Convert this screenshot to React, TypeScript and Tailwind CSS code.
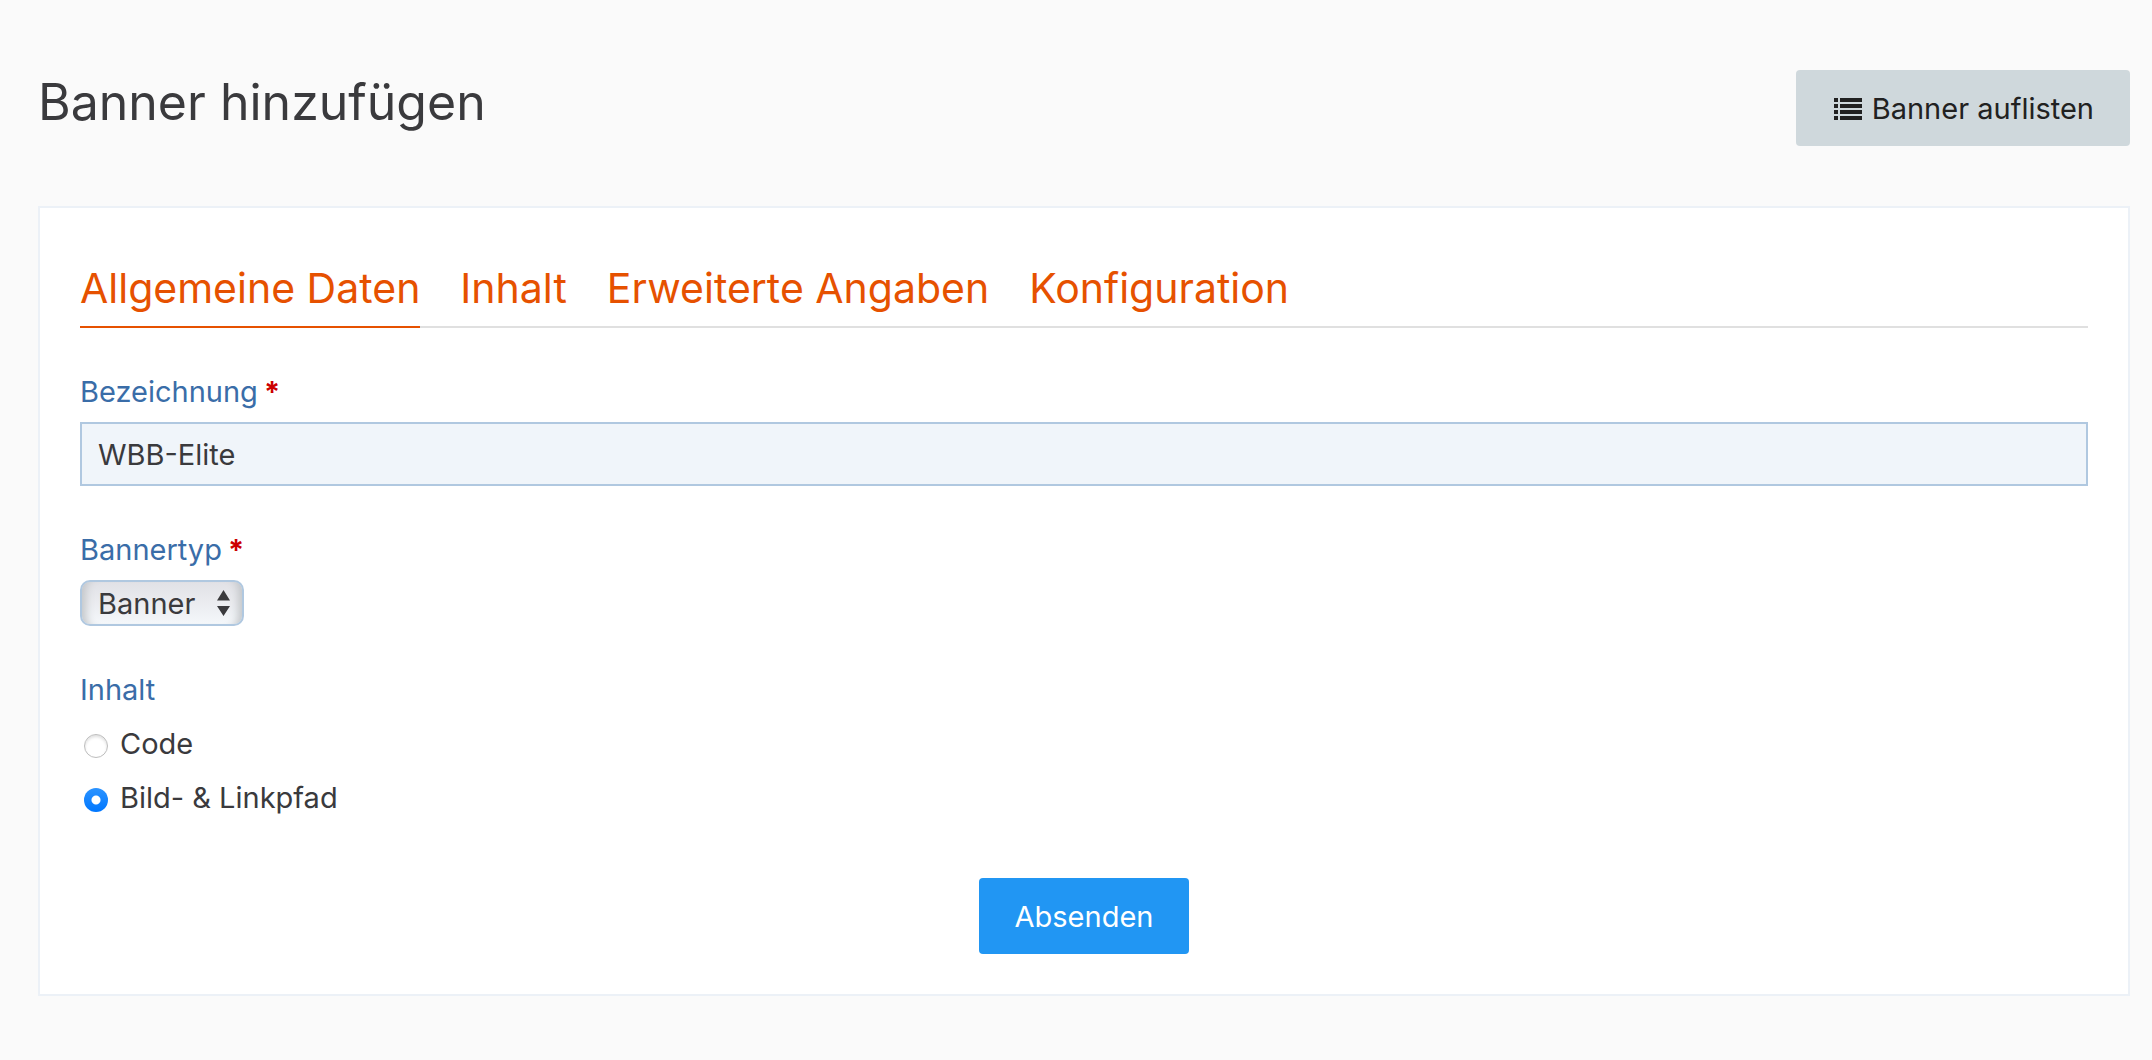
import { useId, useState } from "react";
import type { ReactNode } from "react";

const TABS = ["Allgemeine Daten", "Inhalt", "Erweiterte Angaben", "Konfiguration"];

const CONTENT_TYPES = [
  { value: "code", label: "Code" },
  { value: "path", label: "Bild- & Linkpfad" },
];

const ListIcon = () => (
  <svg viewBox="0 0 28 22" fill="currentColor" shapeRendering="crispEdges" className="w-7 h-[22px]" aria-hidden="true">
    <path d="M0 0h4v4H0zM6 0h22v4H6zM0 6h4v4H0zM6 6h22v4H6zM0 12h4v4H0zM6 12h22v4H6zM0 18h4v4H0zM6 18h22v4H6z" />
  </svg>
);

const SelectArrows = () => (
  <svg
    viewBox="0 0 13 26"
    fill="currentColor"
    className="[grid-area:1/1] justify-self-end self-center w-[13px] h-[26px] mr-[14px] pointer-events-none"
    aria-hidden="true"
  >
    <path d="M6.500 0L13 10.500H0zM0 16h13L6.500 26z" />
  </svg>
);

interface FieldLabelProps {
  htmlFor: string;
  children: ReactNode;
}

function RequiredLabel({ htmlFor, children }: FieldLabelProps) {
  return (
    <label htmlFor={htmlFor} className="flex gap-[6px] leading-10 text-[#3a6da8]">
      {children}
      <span className="text-[#cc0000] font-bold">*</span>
    </label>
  );
}

function TabMenu() {
  const [active, setActive] = useState(TABS[0]);

  return (
    <nav className="flex gap-10 border-b-2 border-[#e0e0e0]" role="tablist">
      {TABS.map((tab) => (
        <button
          key={tab}
          type="button"
          role="tab"
          aria-selected={tab === active}
          onClick={() => setActive(tab)}
          className={
            tab === active
              ? "-mb-[2px] pt-2 pb-[6px] border-b-2 border-[#e65100] text-[41px] leading-[64px] text-[#e65100]"
              : "-mb-[2px] pt-2 pb-[6px] border-b-2 border-transparent text-[41px] leading-[64px] text-[#e65100]"
          }
        >
          {tab}
        </button>
      ))}
    </nav>
  );
}

export default function App() {
  const id = useId();
  const [title, setTitle] = useState("WBB-Elite");
  const [content, setContent] = useState("path");

  return (
    <main className="min-h-screen bg-[#fafafa] pl-[38px] pr-[22px] pt-[70px] pb-16 font-['Inter','Liberation_Sans',sans-serif] text-[29px] text-[#3a3a3d]">
      <header className="flex items-start justify-between">
        <h1 className="text-[50px] leading-[64px]">Banner hinzufügen</h1>
        <a
          href="#liste"
          className="flex items-center gap-[10px] h-[76px] pl-[38px] pr-9 pt-[2px] rounded bg-[#cfd8dc] text-[#212121]"
        >
          <ListIcon />
          Banner auflisten
        </a>
      </header>

      <form
        className="mt-[60px] px-10 pt-10 pb-10 border-2 border-[#ecf1f7] bg-white"
        onSubmit={(e) => e.preventDefault()}
      >
        <TabMenu />

        <div className="mt-11">
          <RequiredLabel htmlFor={`${id}-title`}>Bezeichnung</RequiredLabel>
          <input
            id={`${id}-title`}
            type="text"
            required
            value={title}
            onChange={(e) => setTitle(e.target.value)}
            className="block w-full h-16 mt-[10px] px-4 border-2 border-[#b0c8e0] bg-[#f0f5fa] outline-none"
          />
        </div>

        <div className="mt-11">
          <RequiredLabel htmlFor={`${id}-type`}>Bannertyp</RequiredLabel>
          <div className="grid w-[164px] mt-[10px]">
            <select
              id={`${id}-type`}
              defaultValue="banner"
              className="[grid-area:1/1] appearance-none h-[46px] px-4 rounded-[10px] border-2 border-[#b0c8e0] bg-linear-to-b from-[#e1e1e6] to-[#f4f7fa] shadow-[inset_12px_0_8px_-8px_#c3c6c9,inset_-12px_0_8px_-8px_#c3c6c9] outline-none"
            >
              <option value="banner">Banner</option>
              <option value="text">Text</option>
            </select>
            <SelectArrows />
          </div>
        </div>

        <fieldset className="mt-11">
          <legend className="leading-10 text-[#3a6da8]">Inhalt</legend>
          <div className="flex flex-col items-start gap-[14px] mt-[14px]">
            {CONTENT_TYPES.map((type) => (
              <label key={type.value} className="flex items-center gap-3 pl-1 leading-10">
                <input
                  type="radio"
                  name={`${id}-content`}
                  value={type.value}
                  checked={content === type.value}
                  onChange={() => setContent(type.value)}
                  className="appearance-none size-6 mt-1 rounded-full border border-[#bdbdbd] bg-white shadow-[inset_0_2px_3px_#e0e0e0] checked:border-0 checked:shadow-none checked:bg-[radial-gradient(circle,#fff_4px,transparent_5px),linear-gradient(#2b93ff,#0077ff)]"
                />
                {type.label}
              </label>
            ))}
          </div>
        </fieldset>

        <div className="flex justify-center mt-[60px]">
          <button type="submit" className="h-[76px] px-9 pt-[2px] rounded bg-[#2196f3] text-white">
            Absenden
          </button>
        </div>
      </form>
    </main>
  );
}
